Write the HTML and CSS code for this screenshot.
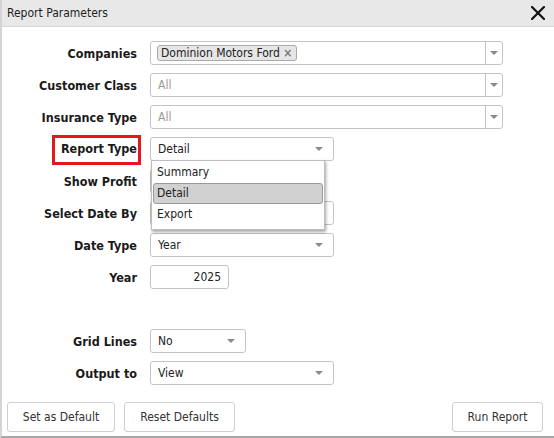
FILE: index.html
```html
<!DOCTYPE html>
<html>
<head>
<meta charset="utf-8">
<link rel="stylesheet" href="styles.css">
</head>
<body>
<div class="dialog">
  <div class="titlebar">
    <span class="title">Report Parameters</span>
    <svg class="close" width="14" height="14" viewBox="0 0 14 14"><path d="M1 1 L13 13 M13 1 L1 13" stroke="#111" stroke-width="2.2" stroke-linecap="square"/></svg>
  </div>
  <div class="form">
    <div class="row">
      <div class="label">Companies</div>
      <div class="multi">
        <div class="multi-field"><span class="chip">Dominion Motors Ford <span class="chip-x">×</span></span></div>
        <div class="multi-btn"><span class="arrow"></span></div>
      </div>
    </div>
    <div class="row">
      <div class="label">Customer Class</div>
      <div class="multi">
        <div class="multi-field"><span class="placeholder">All</span></div>
        <div class="multi-btn"><span class="arrow"></span></div>
      </div>
    </div>
    <div class="row">
      <div class="label">Insurance Type</div>
      <div class="multi">
        <div class="multi-field"><span class="placeholder">All</span></div>
        <div class="multi-btn"><span class="arrow"></span></div>
      </div>
    </div>
    <div class="row">
      <div class="label"><span class="highlight">Report Type</span></div>
      <div class="control">
        <div class="select wide"><span>Detail</span><span class="arrow"></span></div>
        <ul class="popup">
          <li>Summary</li>
          <li class="active">Detail</li>
          <li>Export</li>
        </ul>
      </div>
    </div>
    <div class="row">
      <div class="label">Show Profit</div>
      <div class="select narrow"><span></span><span class="arrow"></span></div>
    </div>
    <div class="row">
      <div class="label">Select Date By</div>
      <div class="select wide"><span></span><span class="arrow"></span></div>
    </div>
    <div class="row">
      <div class="label">Date Type</div>
      <div class="select wide"><span>Year</span><span class="arrow"></span></div>
    </div>
    <div class="row">
      <div class="label">Year</div>
      <div class="numbox">2025</div>
    </div>
    <div class="row"></div>
    <div class="row">
      <div class="label">Grid Lines</div>
      <div class="select narrow"><span>No</span><span class="arrow"></span></div>
    </div>
    <div class="row">
      <div class="label">Output to</div>
      <div class="select wide"><span>View</span><span class="arrow"></span></div>
    </div>
  </div>
  <div class="buttons">
    <button class="btn btn-set">Set as Default</button>
    <button class="btn btn-reset">Reset Defaults</button>
    <span class="spacer"></span>
    <button class="btn btn-run">Run Report</button>
  </div>
</div>
</body>
</html>
```
FILE: styles.css
```css
* { box-sizing: border-box; }
html, body { margin: 0; padding: 0; background: #fff; }
body {
  font-family: "DejaVu Sans Condensed", "DejaVu Sans", sans-serif;
  font-size: 12px;
  color: #222;
  width: 554px;
  height: 438px;
  overflow: hidden;
}
.dialog {
  width: 554px;
  height: 438px;
  border-left: 2px solid #d4d4d4;
  border-bottom: 2px solid #a8a8a8;
  display: flex;
  flex-direction: column;
}
.titlebar {
  height: 27px;
  background: #e8e8e8;
  border-bottom: 1px solid #d6d6d6;
  display: flex;
  align-items: center;
  padding: 0 9px 0 5px;
}
.title { flex: 1; color: #1e1e1e; }
.close { display: block; }
.form {
  padding-top: 10px;
  display: flex;
  flex-direction: column;
}
.row {
  height: 32px;
  display: flex;
  align-items: center;
}
.label {
  width: 135px;
  text-align: right;
  font-weight: bold;
  font-size: 12.5px;
  margin-right: 13px;
  color: #1a1a1a;
}
.highlight {
  position: relative;
  display: inline-block;
  line-height: 16px;
}
.highlight::after {
  content: "";
  position: absolute;
  left: -9px;
  right: -4px;
  top: -6px;
  bottom: -8px;
  border: 3px solid #e8141f;
}
.multi {
  width: 353px;
  height: 24px;
  border: 1px solid #c4c4c4;
  border-radius: 3px;
  display: flex;
}
.multi-field {
  flex: 1;
  display: flex;
  align-items: center;
  padding-left: 6px;
}
.multi-btn {
  width: 17px;
  border-left: 1px solid #c4c4c4;
  display: flex;
  align-items: center;
  justify-content: center;
}
.chip {
  background: #e6e6e6;
  border: 1px solid #aaa;
  border-radius: 3px;
  padding: 0 4px 0 3px;
  height: 16px;
  line-height: 14px;
  color: #222;
}
.chip-x { color: #777; font-weight: bold; }
.placeholder { color: #999; padding-left: 1px; }
.arrow {
  width: 0;
  height: 0;
  border-left: 4px solid transparent;
  border-right: 4px solid transparent;
  border-top: 4px solid #8a8a8a;
}
.control { position: relative; }
.select {
  height: 24px;
  border: 1px solid #c4c4c4;
  border-radius: 3px;
  display: flex;
  align-items: center;
  justify-content: space-between;
  padding: 0 10px 0 7px;
  color: #222;
}
.select.wide { width: 184px; }
.select.narrow { width: 96px; }
.numbox {
  width: 79px;
  height: 24px;
  border: 1px solid #c4c4c4;
  border-radius: 3px;
  display: flex;
  align-items: center;
  justify-content: flex-end;
  padding-right: 7px;
}
.popup {
  position: absolute;
  top: 23px;
  left: 1px;
  width: 174px;
  margin: 0;
  padding: 1px 1px 4px;
  list-style: none;
  background: #fff;
  border: 1px solid #bdbdbd;
  box-shadow: 1px 2px 3px rgba(0,0,0,0.35);
  z-index: 5;
}
.popup li {
  height: 21px;
  line-height: 19px;
  padding-left: 3px;
  border: 1px solid transparent;
  border-radius: 3px;
}
.popup li.active {
  background: #d1d1d1;
  border-color: #9a9a9a;
}
.buttons {
  margin-top: auto;
  display: flex;
  padding: 0 11px 4px 5px;
}
.btn {
  font-family: inherit;
  font-size: 12px;
  color: #333;
  background: #fff;
  border: 1px solid #cfcfcf;
  border-radius: 3px;
  height: 30px;
  padding: 0;
}
.btn-set { width: 108px; }
.btn-reset { width: 111px; margin-left: 9px; }
.btn-run { width: 91px; }
.spacer { flex: 1; }
```
